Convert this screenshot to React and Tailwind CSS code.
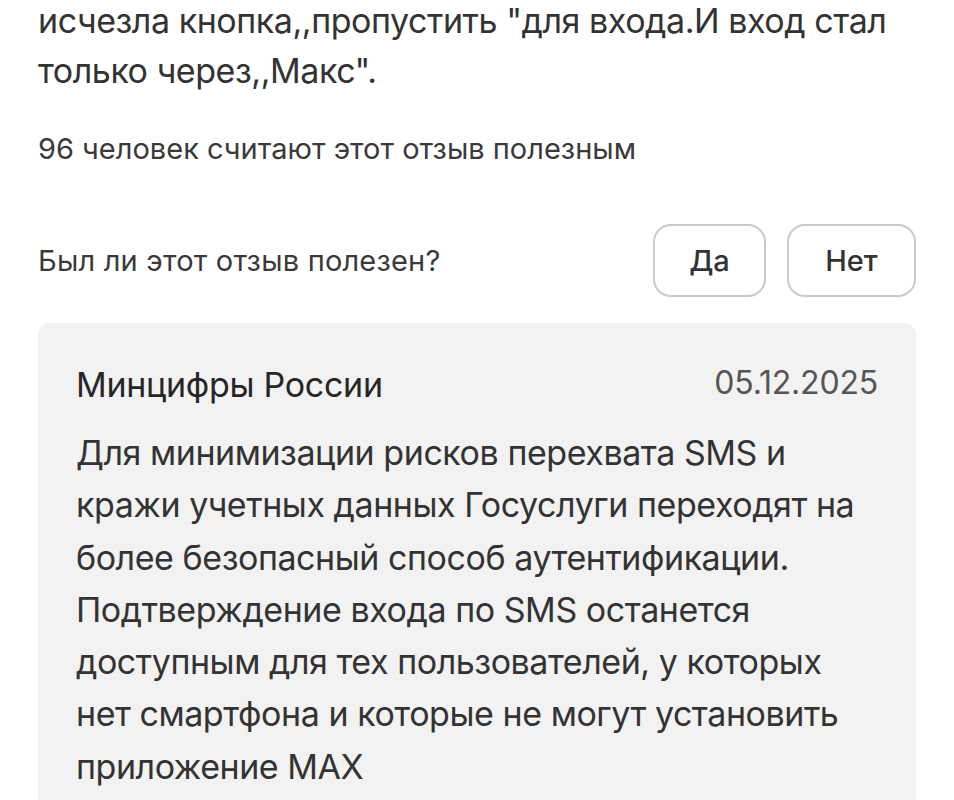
import React from 'react'

const App = () => {
  return (
    <div
      className="h-[800px] w-[954px] overflow-hidden bg-white text-[#333]"
      style={{ fontFamily: 'Inter, "Liberation Sans", sans-serif' }}
    >
      <div className="px-[38px]">
        <p className="-mt-[4px] text-[34px] leading-[50px] tracking-[-0.45px]">
          исчезла кнопка,,пропустить "для входа.И вход стал
          <br />
          только через,,Макс".
        </p>
        <p className="mt-[36px] text-[29px] leading-[34px] text-[#3a3a3a]">
          96 человек считают этот отзыв полезным
        </p>
        <div className="mt-[58px] flex items-center justify-between">
          <span className="text-[29px] tracking-[0.2px] text-[#3a3a3a]">
            Был ли этот отзыв полезен?
          </span>
          <div className="flex gap-[21px]">
            <button className="h-[73px] w-[113px] rounded-[18px] border-2 border-[#cacaca] text-[29px] font-medium text-[#333]">
              Да
            </button>
            <button className="h-[73px] w-[129px] rounded-[18px] border-2 border-[#cacaca] text-[29px] font-medium text-[#333]">
              Нет
            </button>
          </div>
        </div>
        <div className="mt-[26px] rounded-[12px] bg-[#f2f2f2] px-[38px] pt-[42px] pb-[40px]">
          <div className="flex items-start justify-between">
            <span className="text-[34px] leading-[40px] tracking-[-0.3px] text-[#262626]">
              Минцифры России
            </span>
            <span className="text-[32px] leading-[36px] tracking-[-0.2px] text-[#555]">
              05.12.2025
            </span>
          </div>
          <p className="mt-[22px] text-[34px] leading-[52.3px] tracking-[-0.45px] text-[#333]">
            Для минимизации рисков перехвата SMS и
            <br />
            кражи учетных данных Госуслуги переходят на
            <br />
            более безопасный способ аутентификации.
            <br />
            Подтверждение входа по SMS останется
            <br />
            доступным для тех пользователей, у которых
            <br />
            нет смартфона и которые не могут установить
            <br />
            приложение MAX
          </p>
        </div>
      </div>
    </div>
  )
}

export default App
